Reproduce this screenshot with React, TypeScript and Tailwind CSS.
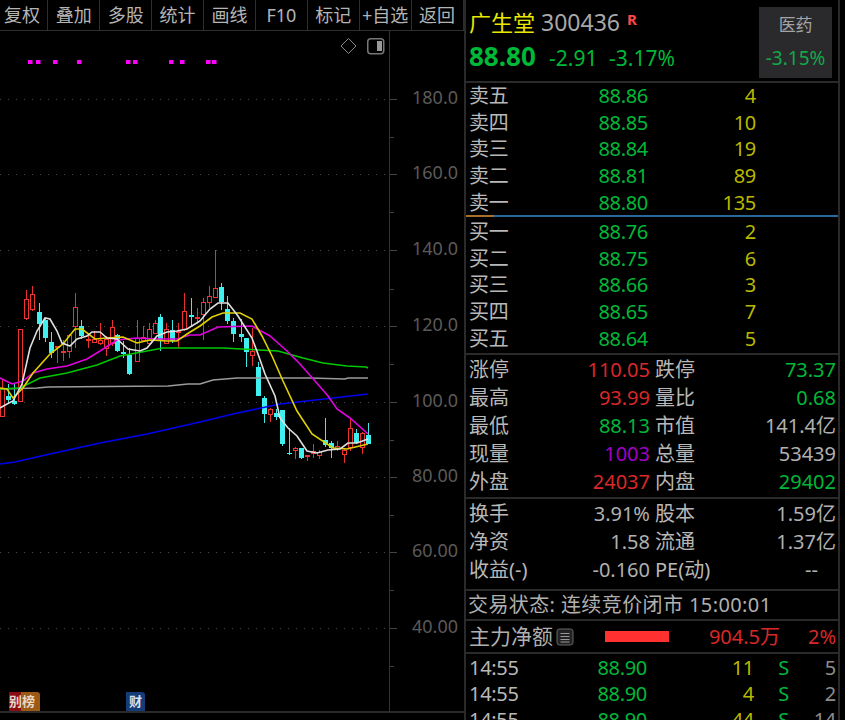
import React from "react";

const toolbarItems = ["复权", "叠加", "多股", "统计", "画线", "F10", "标记", "+自选", "返回"];
const CN = "font-['Noto_Sans','Noto_Sans_CJK_SC',sans-serif]";

// [x, wickTop, wickBottom, bodyTop, bodyBottom]
const redCandles = [
  [2, 378, 416, 387, 416], [20, 328, 401, 328, 401], [26, 289, 319, 298, 318], [32, 285, 310, 293, 309],
  [57, 345, 362, 345, 346], [63, 339, 360, 350, 352], [69, 333, 357, 334, 351], [75, 292, 347, 306, 326],
  [88, 333, 347, 338, 340], [94, 330, 342, 338, 342], [100, 322, 344, 339, 343], [106, 335, 355, 338, 348],
  [112, 319, 345, 326, 343], [137, 319, 361, 337, 361], [143, 325, 341, 336, 340], [149, 322, 343, 328, 343],
  [155, 319, 333, 322, 333], [166, 322, 343, 328, 343], [178, 322, 347, 330, 331], [184, 292, 330, 310, 329],
  [197, 307, 323, 316, 318], [203, 297, 339, 301, 314], [209, 285, 307, 295, 302], [215, 249, 297, 287, 297],
  [252, 327, 365, 350, 355], [270, 407, 421, 408, 414], [295, 446, 458, 447, 450], [307, 454, 460, 454, 455],
  [313, 443, 457, 450, 453], [319, 449, 458, 451, 455], [337, 440, 450, 445, 448], [344, 447, 462, 449, 454],
  [350, 417, 450, 427, 447], [362, 431, 453, 432, 447],
];
const cyanCandles = [
  [8, 383, 403, 395, 399], [14, 383, 404, 400, 403], [39, 302, 339, 311, 323], [45, 318, 341, 319, 337],
  [51, 331, 357, 341, 352], [81, 319, 338, 325, 335], [117, 333, 351, 334, 350], [123, 340, 357, 351, 353],
  [129, 347, 374, 354, 373], [160, 313, 350, 316, 339], [172, 319, 342, 329, 340], [191, 297, 326, 314, 316],
  [221, 282, 309, 286, 301], [227, 295, 323, 308, 320], [233, 317, 341, 320, 333], [241, 318, 341, 333, 336],
  [246, 337, 366, 337, 351], [258, 361, 395, 366, 395], [264, 395, 422, 397, 413], [276, 408, 419, 412, 416],
  [282, 409, 445, 409, 443], [289, 427, 454, 452, 453], [301, 447, 458, 447, 457], [325, 417, 446, 439, 444],
  [331, 440, 457, 442, 447], [356, 428, 443, 432, 442], [368, 422, 443, 434, 443],
];

const lines: { color: string; pts: number[][] }[] = [
  {
    color: "#0000f0",
    pts: [[0, 463], [15, 461], [50, 453], [100, 442], [147, 433], [200, 421], [233, 413], [280, 403], [333, 397], [368, 393]],
  },
  {
    color: "#9a9a9a",
    pts: [[0, 388], [37, 387], [48, 386], [168, 385], [188, 383], [200, 383], [213, 379], [237, 377], [310, 377], [345, 378], [348, 377], [368, 377]],
  },
  {
    color: "#00c800",
    pts: [[0, 388], [20, 387], [40, 377], [67, 372], [97, 364], [120, 355], [147, 350], [163, 347], [223, 347], [278, 350], [303, 357], [323, 362], [347, 365], [366, 366], [368, 367]],
  },
  {
    color: "#e000e0",
    pts: [[0, 377], [12, 383], [23, 380], [33, 372], [47, 368], [67, 365], [87, 358], [100, 350], [117, 339], [137, 337], [157, 338], [177, 338], [190, 334], [200, 334], [218, 326], [252, 325], [270, 335], [287, 350], [300, 363], [315, 380], [328, 395], [337, 408], [350, 417], [368, 433]],
  },
  {
    color: "#e0d000",
    pts: [[0, 387], [7, 388], [13, 397], [23, 387], [33, 372], [50, 353], [63, 343], [75, 328], [82, 328], [95, 338], [107, 337], [123, 336], [137, 342], [150, 339], [167, 340], [177, 340], [187, 333], [200, 325], [212, 316], [223, 312], [240, 312], [252, 318], [262, 335], [272, 355], [283, 380], [297, 410], [312, 433], [333, 447], [347, 448], [368, 443]],
  },
  {
    color: "#e0e0e0",
    pts: [[0, 407], [7, 403], [13, 400], [22, 383], [30, 347], [37, 330], [45, 317], [50, 318], [57, 330], [62, 342], [70, 345], [77, 338], [87, 335], [92, 331], [100, 331], [107, 337], [117, 338], [128, 348], [140, 350], [147, 347], [157, 335], [167, 331], [177, 330], [187, 328], [200, 320], [210, 308], [218, 302], [228, 302], [238, 315], [252, 337], [258, 353], [265, 373], [275, 395], [280, 417], [288, 427], [297, 435], [307, 450], [317, 452], [328, 449], [340, 448], [348, 442], [357, 442], [368, 438]],
  },
];

const gridRows = [98, 173, 249, 325, 401, 476, 551, 627];
const bigTicks = [
  [98, "180.0"], [173, "160.0"], [249, "140.0"], [325, "120.0"],
  [401, "100.0"], [476, "80.00"], [551, "60.00"], [627, "40.00"],
] as const;
const smallTicks = [136, 211, 288, 363, 439, 514, 589, 665];
const magentaDots = [28, 36, 53, 77, 126, 133, 169, 180, 206, 212];

function KlineChart() {
  return (
    <svg className="absolute inset-0" width="463" height="682" viewBox="0 30 463 682">
      {gridRows.map((y) => (
        <line key={y} x1="0" x2="386" y1={y + 0.5} y2={y + 0.5} stroke="#4a4a4a" strokeDasharray="1 7" />
      ))}
      {magentaDots.map((x) => (
        <rect key={x} x={x} y="59" width="4.500" height="4" fill="#ff00ff" />
      ))}
      {cyanCandles.map(([x, a, b, c, d]) => (
        <g key={x} shapeRendering="crispEdges">
          <rect x={x - 0.5} y={a} width="1" height={b - a} fill="#40e8e8" />
          <rect x={x - 2} y={c} width="5" height={d - c} fill="#40f0f0" />
        </g>
      ))}
      {redCandles.map(([x, a, b, c, d]) => (
        <g key={x} shapeRendering="crispEdges">
          <rect x={x - 0.5} y={a} width="1" height={b - a} fill="#e8302e" />
          <rect x={x - 1.5} y={c + 0.5} width="4" height={Math.max(d - c - 1, 1)} fill="#000" stroke="#f03230" />
        </g>
      ))}
      {lines.map((l) => (
        <polyline key={l.color} points={l.pts.map((p) => p.join(",")).join(" ")} fill="none" stroke={l.color} strokeWidth="1.600" />
      ))}
      {/* price axis */}
      <line x1="389.500" x2="389.500" y1="30" y2="712" stroke="#333" />
      {bigTicks.map(([y, label]) => (
        <g key={y}>
          <line x1="390" x2="397" y1={y + 0.5} y2={y + 0.5} stroke="#444" />
          <text x="412" y={y + 5} fontSize="18" fill="#5a5a5a" fontFamily="'Noto Sans',sans-serif">
            {label}
          </text>
        </g>
      ))}
      {smallTicks.map((y) => (
        <line key={y} x1="390" x2="394" y1={y + 0.5} y2={y + 0.5} stroke="#444" />
      ))}
      {/* top right tools */}
      <path d="M348.500 37.500 L356 45 L348.500 52.500 L341 45 Z" fill="none" stroke="#888" />
      <rect x="367.750" y="37.750" width="16" height="15" rx="3" fill="none" stroke="#777" strokeWidth="1.500" />
      <rect x="377" y="40" width="5" height="10" fill="#999" />
    </svg>
  );
}

function Toolbar() {
  return (
    <div className="flex h-[31px] border-b border-[#2e2e2e]">
      <div className="-ml-[3.500px] flex">
        {toolbarItems.map((item) => (
          <div
            key={item}
            className="flex w-[51.900px] shrink-0 items-center justify-center overflow-hidden whitespace-nowrap border-r border-[#2e2e2e] text-[18px] leading-[28px] text-[#b4b4b4]"
          >
            {item}
          </div>
        ))}
      </div>
    </div>
  );
}

function OrderRow({ label, price, vol }: { label: string; price: string; vol: string }) {
  return (
    <div className="flex h-[26.600px] items-center leading-none">
      <span className="w-[132px] pl-[3px] text-[#b8b8b8]">{label}</span>
      <span className="w-[50px] text-right text-[#00b838]">{price}</span>
      <span className="w-[108px] text-right text-[#b8b800]">{vol}</span>
    </div>
  );
}

function StatRow({ a, b, bColor, c, d, dColor }: { a: string; b: string; bColor: string; c: string; d: string; dColor: string }) {
  return (
    <div className="flex h-[28px] items-center leading-none tracking-normal">
      <span className="w-[66px] shrink-0 whitespace-nowrap pl-[3px] text-[#b8b8b8]">{a}</span>
      <span className={`w-[118px] shrink-0 whitespace-nowrap text-right ${bColor}`}>{b}</span>
      <span className="w-[72px] shrink-0 whitespace-nowrap pl-[5px] text-[#b8b8b8]">{c}</span>
      <span className={`w-[114px] shrink-0 whitespace-nowrap text-right ${dColor}`}>{d}</span>
    </div>
  );
}

function TickRow({ time, price, vol, flag, num }: { time: string; price: string; vol: string; flag: string; num: string }) {
  return (
    <div className="flex h-[26px] items-center leading-none">
      <span className="w-[130px] pl-[3px] text-[#b8b8b8]">{time}</span>
      <span className="w-[51px] text-right text-[#00b838]">{price}</span>
      <span className="w-[107px] text-right text-[#b8b800]">{vol}</span>
      <span className="w-[35px] text-right text-[#00b838]">{flag}</span>
      <span className="w-[47px] text-right text-[#8c8c8c]">{num}</span>
    </div>
  );
}

function QuotePanel() {
  return (
    <div className="flex h-[720px] w-[374px] shrink-0 flex-col overflow-hidden border-r-2 border-[#2a2a2a] text-[20px] tracking-[-0.3px]">
      {/* header */}
      <div className="flex h-[83px] shrink-0 justify-between border-b-2 border-[#2a2a2a] pr-[6px]">
        <div className="pl-[3px] pt-[7px]">
          <div className="flex h-[30px] items-center gap-[6px] leading-none">
            <span className="text-[22px] tracking-normal text-[#e8e800]">广生堂</span>
            <span className="text-[23px] tracking-normal text-[#a8a8a8]">300436</span>
            <span className="mb-[6px] ml-[1px] text-[15px] font-bold text-[#ff4848]">R</span>
          </div>
          <div className="mt-[6px] flex items-baseline leading-none tracking-normal text-[#00b838]">
            <span className="w-[80px] text-[26px] font-bold">88.80</span>
            <span className="w-[60px] text-[21px]">-2.91</span>
            <span className="text-[21px]">-3.17%</span>
          </div>
        </div>
        <div className="mt-[7px] flex h-[71px] w-[73px] flex-col items-center bg-[#2a2a2c] pt-[9px] leading-none">
          <span className="text-[17px] text-[#a4a4a4]">医药</span>
          <span className="mt-[16px] text-[19px] tracking-normal text-[#12a84a]">-3.15%</span>
        </div>
      </div>

      {/* ask side */}
      <div className="h-[132px] shrink-0">
        <OrderRow label="卖五" price="88.86" vol="4" />
        <OrderRow label="卖四" price="88.85" vol="10" />
        <OrderRow label="卖三" price="88.84" vol="19" />
        <OrderRow label="卖二" price="88.81" vol="89" />
        <OrderRow label="卖一" price="88.80" vol="135" />
      </div>
      <div className="flex h-[2px] shrink-0">
        <div className="w-[28px] bg-[#a87028]" />
        <div className="flex-1 bg-[#28689c]" />
      </div>
      {/* bid side */}
      <div className="h-[138px] shrink-0 border-b-2 border-[#2a2a2a] pt-[2px]">
        <OrderRow label="买一" price="88.76" vol="2" />
        <OrderRow label="买二" price="88.75" vol="6" />
        <OrderRow label="买三" price="88.66" vol="3" />
        <OrderRow label="买四" price="88.65" vol="7" />
        <OrderRow label="买五" price="88.64" vol="5" />
      </div>

      {/* stats */}
      <div className="h-[144px] shrink-0 border-b-2 border-[#2a2a2a] pt-[1px]">
        <StatRow a="涨停" b="110.05" bColor="text-[#d82828]" c="跌停" d="73.37" dColor="text-[#00b838]" />
        <StatRow a="最高" b="93.99" bColor="text-[#d82828]" c="量比" d="0.68" dColor="text-[#00b838]" />
        <StatRow a="最低" b="88.13" bColor="text-[#00b838]" c="市值" d="141.4亿" dColor="text-[#b0b0b0]" />
        <StatRow a="现量" b="1003" bColor="text-[#a000c8]" c="总量" d="53439" dColor="text-[#b0b0b0]" />
        <StatRow a="外盘" b="24037" bColor="text-[#d82828]" c="内盘" d="29402" dColor="text-[#00b838]" />
      </div>
      <div className="h-[92px] shrink-0 border-b-2 border-[#2a2a2a] pt-[1px]">
        <StatRow a="换手" b="3.91%" bColor="text-[#b0b0b0]" c="股本" d="1.59亿" dColor="text-[#b0b0b0]" />
        <StatRow a="净资" b="1.58" bColor="text-[#b0b0b0]" c="流通" d="1.37亿" dColor="text-[#b0b0b0]" />
        <StatRow a="收益(-)" b="-0.160" bColor="text-[#b0b0b0]" c="PE(动)" d="--" dColor="pr-[18px] text-[#b0b0b0]" />
      </div>

      {/* status */}
      <div className="flex h-[30px] shrink-0 items-center whitespace-nowrap border-b-2 border-[#2a2a2a] pl-[2px] text-[20px] leading-none tracking-[0.4px] text-[#b0b0b0]">
        交易状态: 连续竞价闭市 15:00:01
      </div>
      <div className="flex h-[33px] shrink-0 items-center border-b-2 border-[#2a2a2a] pl-[3px] leading-none">
        <span className="text-[21px] tracking-normal text-[#b0b0b0]">主力净额</span>
        <svg className="ml-[3px]" width="18" height="18" viewBox="0 0 18 18">
          <rect x="1" y="1" width="16" height="16" rx="2.500" fill="#222" stroke="#666" />
          <path d="M4.500 5.500h9M4.500 8.500h9M4.500 11.500h9M4.500 14h9" stroke="#999" />
        </svg>
        <div className="ml-[31px] h-[11px] w-[64px] bg-[#ff3030]" />
        <span className="w-[111px] text-right tracking-normal text-[#d82828]">904.5万</span>
        <span className="w-[56px] text-right tracking-normal text-[#d82828]">2%</span>
      </div>

      {/* ticks */}
      <div className="flex-1 overflow-hidden pt-[1px]">
        <TickRow time="14:55" price="88.90" vol="11" flag="S" num="5" />
        <TickRow time="14:55" price="88.90" vol="4" flag="S" num="2" />
        <TickRow time="14:55" price="88.90" vol="44" flag="S" num="14" />
      </div>
    </div>
  );
}

export default function App() {
  return (
    <div className={`flex h-[720px] w-[845px] overflow-hidden bg-black ${CN}`}>
      <div className="relative h-[720px] w-[466px] shrink-0 overflow-hidden border-r-2 border-[#2a2a2a]">
        <Toolbar />
        <div className="relative h-[682px] border-b-2 border-[#2a2a2a]">
          <KlineChart />
          {/* 龙虎榜 / 财报 markers */}
          <div className="absolute left-[9px] top-[661px] flex text-[13px] font-bold leading-[19px] text-[#e8d8c8]">
            <span className="h-[19px] w-[12px] overflow-hidden bg-[#8c0c14]">别</span>
            <span className="h-[19px] w-[19px] rounded-tr-[3px] bg-[#9c5a14] pl-[1px]">榜</span>
          </div>
          <div className="absolute left-[126px] top-[661px] h-[19px] w-[19px] rounded-tr-[3px] bg-[#143c78] pl-[3px] text-[13px] font-bold leading-[19px] text-[#d8e0ec]">
            财
          </div>
        </div>
      </div>
      <QuotePanel />
    </div>
  );
}
